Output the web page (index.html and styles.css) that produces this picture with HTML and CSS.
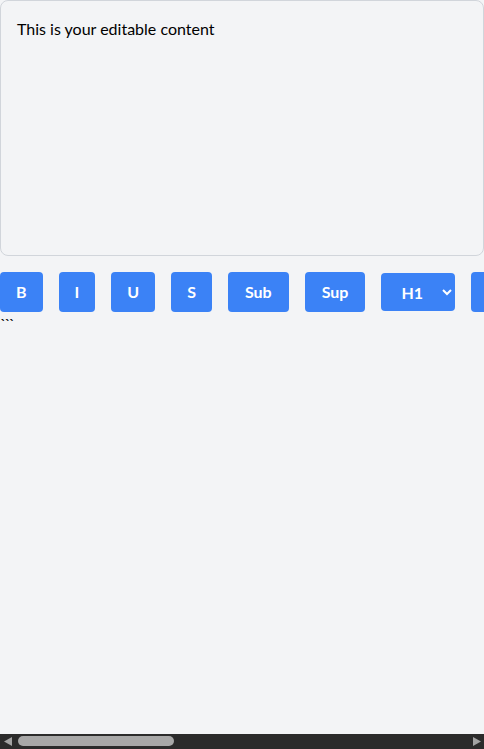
FILE: index.html
```
<!DOCTYPE html>
<html lang="en">
<head>
<meta charset="utf-8">
<title>Editor</title>
<link rel="stylesheet" href="styles.css">
</head>
<body>
<div class="app">
  <div class="page">
    <div class="editor" contenteditable="true">This is your editable content</div>
    <div class="toolbar">
      <button class="btn">B</button>
      <button class="btn">I</button>
      <button class="btn">U</button>
      <button class="btn">S</button>
      <button class="btn btn-sub">Sub</button>
      <button class="btn btn-sub">Sup</button>
      <select class="heading">
        <option>H1</option>
        <option>H2</option>
        <option>H3</option>
      </select>
      <button class="btn">OL</button>
    </div>
    <div class="ticks">&#96;&#96;&#96;</div>
  </div>
  <div class="hscroll" aria-hidden="true">
    <svg class="arrow" width="15" height="15" viewBox="0 0 15 15"><path d="M4 7.5 L12 3 L12 12 Z" fill="#a3a3a3"/></svg>
    <div class="track"><div class="thumb"></div></div>
    <svg class="arrow" width="15" height="15" viewBox="0 0 15 15"><path d="M12 7.5 L4 3 L4 12 Z" fill="#a3a3a3"/></svg>
  </div>
</div>
</body>
</html>
```

FILE: styles.css
```
html {
  background: #f3f4f6;
}
body {
  margin: 0;
  background: #f3f4f6;
  font-family: Lato, "Noto Sans", sans-serif;
  font-size: 16px;
  line-height: 24px;
  color: #000;
}
.app {
  display: flex;
  flex-direction: column;
  height: 100vh;
  overflow: hidden;
}
.page {
  flex: 1;
  min-height: 0;
  overflow: hidden;
}
.editor {
  box-sizing: border-box;
  height: 256px;
  padding: 16px;
  border: 1px solid #d1d5db;
  border-radius: 8px;
  margin-bottom: 16px;
  background: #f3f4f6;
  color: #000;
  outline: none;
}
.toolbar {
  display: flex;
  align-items: center;
  gap: 16px;
}
.btn {
  flex-shrink: 0;
  font-family: inherit;
  font-size: 16px;
  line-height: 24px;
  font-weight: 700;
  color: #fff;
  background: #3b82f6;
  border: none;
  border-radius: 4px;
  padding: 8px 16px;
  margin: 0;
}
.btn-sub {
  padding: 8px 17px;
}
.heading {
  flex-shrink: 0;
  font-family: inherit;
  font-size: 16px;
  font-weight: 700;
  color: #fff;
  background: #3b82f6;
  border: none;
  border-radius: 4px;
  padding: 8px 16px;
  margin: 0;
  height: 38px;
  width: 74px;
}
.ticks {
  font-size: 16px;
  line-height: 24px;
  letter-spacing: -2px;
  color: #000;
}
.hscroll {
  flex-shrink: 0;
  height: 15px;
  display: flex;
  background: #2b2b2b;
}
.arrow {
  display: block;
  flex-shrink: 0;
}
.track {
  flex: 1;
  padding: 2px 0 0 3px;
}
.thumb {
  width: 156px;
  height: 10px;
  border-radius: 5px;
  background: #a8a8a8;
}
```
